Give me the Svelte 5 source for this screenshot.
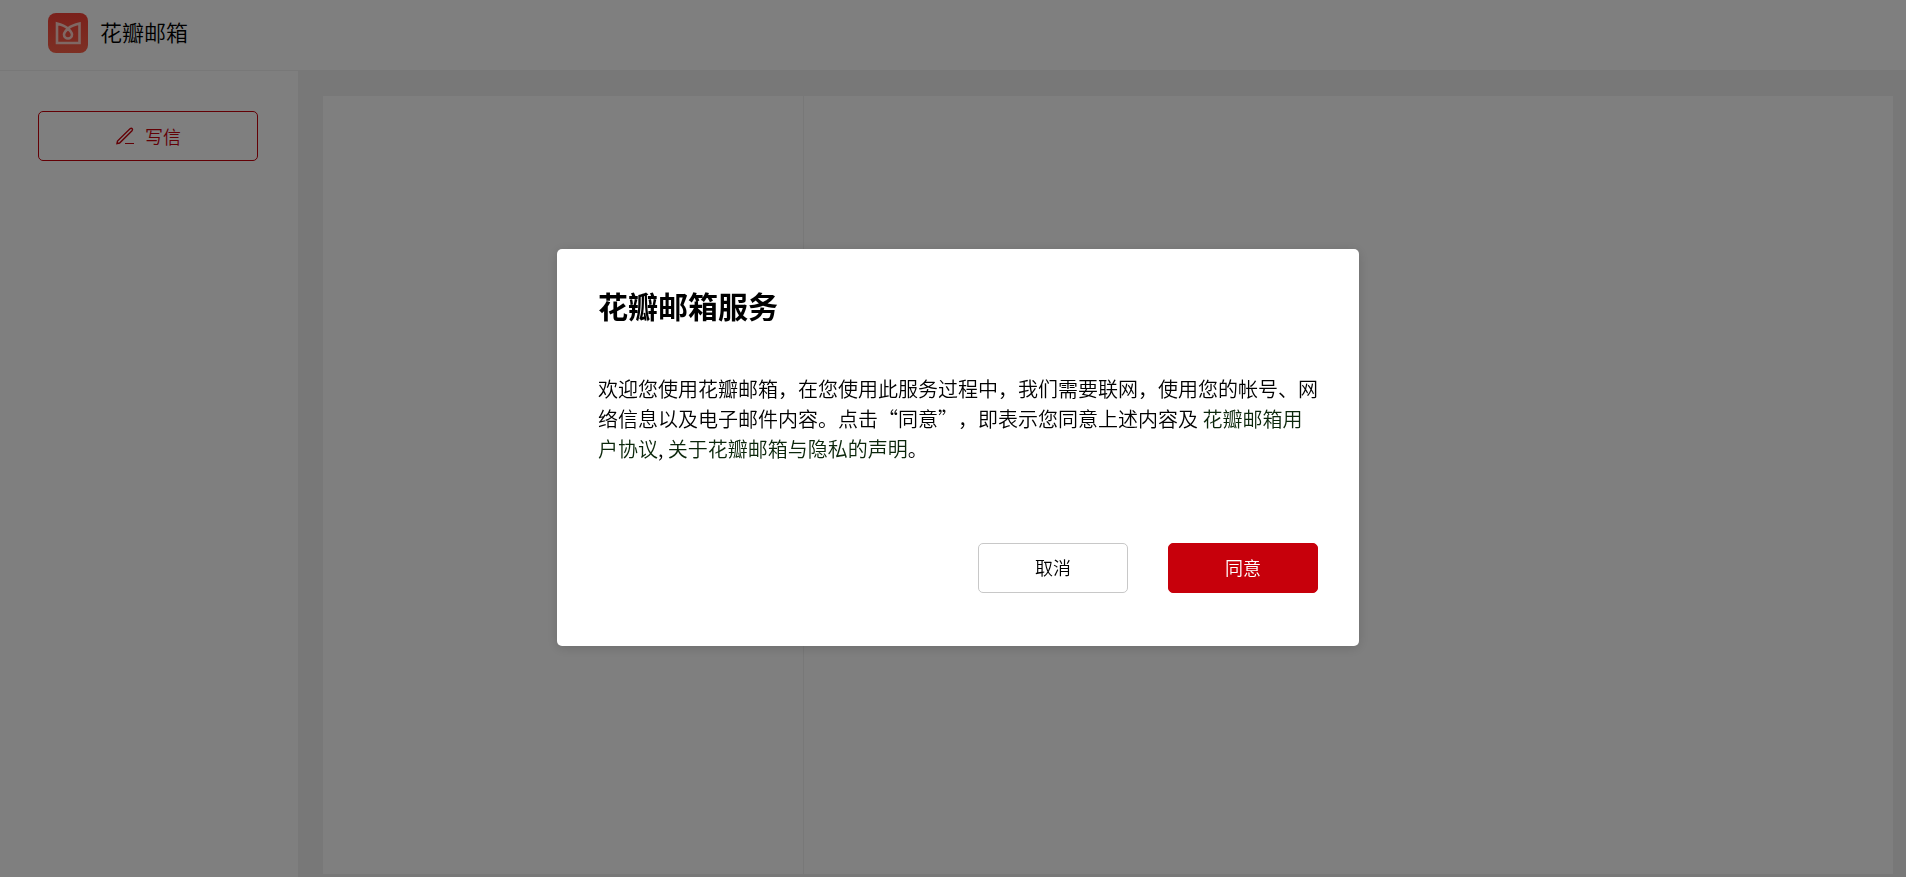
<script>
    let visible = true;

    const close = () => {
        visible = false;
    };
</script>

<div class="page">
    <header class="header">
        <svg class="logo" viewBox="0 0 40 40" aria-hidden="true">
            <defs>
                <linearGradient id="red" x1="0" y1="0" x2="0" y2="1">
                    <stop offset="0" stop-color="#f54238" />
                    <stop offset="1" stop-color="#fa6048" />
                </linearGradient>
            </defs>
            <rect width="40" height="40" rx="8" fill="url(#red)" />
            <path
                d="M20 15.500 C18 17.500 16 19.500 16 21.500 A4 4 0 0 0 24 21.500 C24 19.500 22 17.500 20 15.500 C17 13 13 11.500 9 10.500 V30 H31.500 V10.500 C27 11.500 23 13 20 15.500"
                fill="none"
                stroke="#ffd0c8"
                stroke-width="2.6"
            />
        </svg>
        <span class="name">花瓣邮箱</span>
    </header>

    <div class="body">
        <aside class="sidebar">
            <button class="write">
                <svg class="pen" viewBox="0 0 20 20" aria-hidden="true">
                    <path d="M2 17.500 L2.500 15 L15 2.800 Q16.300 1.800 17.100 2.600 Q18 3.500 17 4.800 L4.600 17 Z" />
                    <path class="line" d="M10 17.500 H19" />
                </svg>
                写信
            </button>
        </aside>
        <main class="content">
            <section class="list"></section>
            <section class="detail"></section>
        </main>
    </div>
</div>

{#if visible}
    <div class="overlay">
        <div class="dialog" role="dialog" aria-modal="true" aria-labelledby="title">
            <h1 id="title">花瓣邮箱服务</h1>
            <p>
                欢迎您使用花瓣邮箱，在您使用此服务过程中，我们需要联网，使用您的帐号、网络信息以及电子邮件内容。点击“同意”，即表示您同意上述内容及
                <a href="#agreement">花瓣邮箱用户协议</a>,
                <a href="#privacy">关于花瓣邮箱与隐私的声明</a>。
            </p>
            <div class="actions">
                <button on:click={close}>取消</button>
                <button class="primary" on:click={close}>同意</button>
            </div>
        </div>
    </div>
{/if}

<style>
    :global(body) {
        margin: 0;
        font-family: "Noto Sans CJK SC", sans-serif;
        font-weight: 350;
        color: #000;
    }
    .page {
        display: flex;
        flex-direction: column;
        height: 100vh;
        background: #f1f1f1;
    }
    .header {
        display: flex;
        align-items: flex-start;
        gap: 12px;
        height: 71px;
        padding: 13px 48px 0;
        box-sizing: border-box;
        background: #fff;
        border-bottom: 1px solid #f1f1f1;
    }
    .logo {
        width: 40px;
        height: 40px;
    }
    .name {
        font-size: 22px;
        line-height: 36px;
    }
    .body {
        display: flex;
        flex: 1;
    }
    .sidebar {
        width: 298px;
        padding: 40px 40px 0 38px;
        box-sizing: border-box;
        background: #fff;
    }
    button {
        display: flex;
        align-items: center;
        justify-content: center;
        width: 150px;
        height: 50px;
        padding: 0 0 2px;
        border: 1px solid #c8c8c8;
        border-radius: 5px;
        background: #fff;
        color: #000;
        font: inherit;
        font-size: 18px;
        cursor: pointer;
    }
    .write {
        gap: 10px;
        width: 100%;
        padding: 0;
        border-color: #c7000b;
        color: #c7000b;
    }
    .pen {
        width: 20px;
        height: 20px;
        fill: none;
        stroke: currentColor;
        stroke-width: 1.4;
    }
    .line {
        stroke-width: 1;
    }
    .content {
        display: flex;
        flex: 1;
        margin: 25px 13px 3px 25px;
        background: #fff;
    }
    .list {
        width: 480px;
        border-right: 1px solid #f1f1f1;
    }
    .detail {
        flex: 1;
    }
    .overlay {
        position: fixed;
        inset: 0;
        display: flex;
        align-items: center;
        justify-content: center;
        padding: 17px 0 0 10px;
        background: rgba(0, 0, 0, 0.5);
    }
    .dialog {
        width: 802px;
        padding: 36px 41px 53px;
        box-sizing: border-box;
        border-radius: 5px;
        background: #fff;
        box-shadow: 0 2px 12px rgba(0, 0, 0, 0.15);
    }
    h1 {
        margin: 0 0 49px;
        font-size: 30px;
        line-height: 40px;
        font-weight: 700;
    }
    p {
        margin: 0 0 79px;
        font-size: 20px;
        line-height: 30px;
        text-spacing-trim: space-all;
    }
    a {
        color: #0a260a;
        text-decoration: none;
    }
    .actions {
        display: flex;
        justify-content: flex-end;
        gap: 40px;
    }
    .primary {
        border-color: #c7000b;
        background: #c7000b;
        color: #fff;
    }
</style>
